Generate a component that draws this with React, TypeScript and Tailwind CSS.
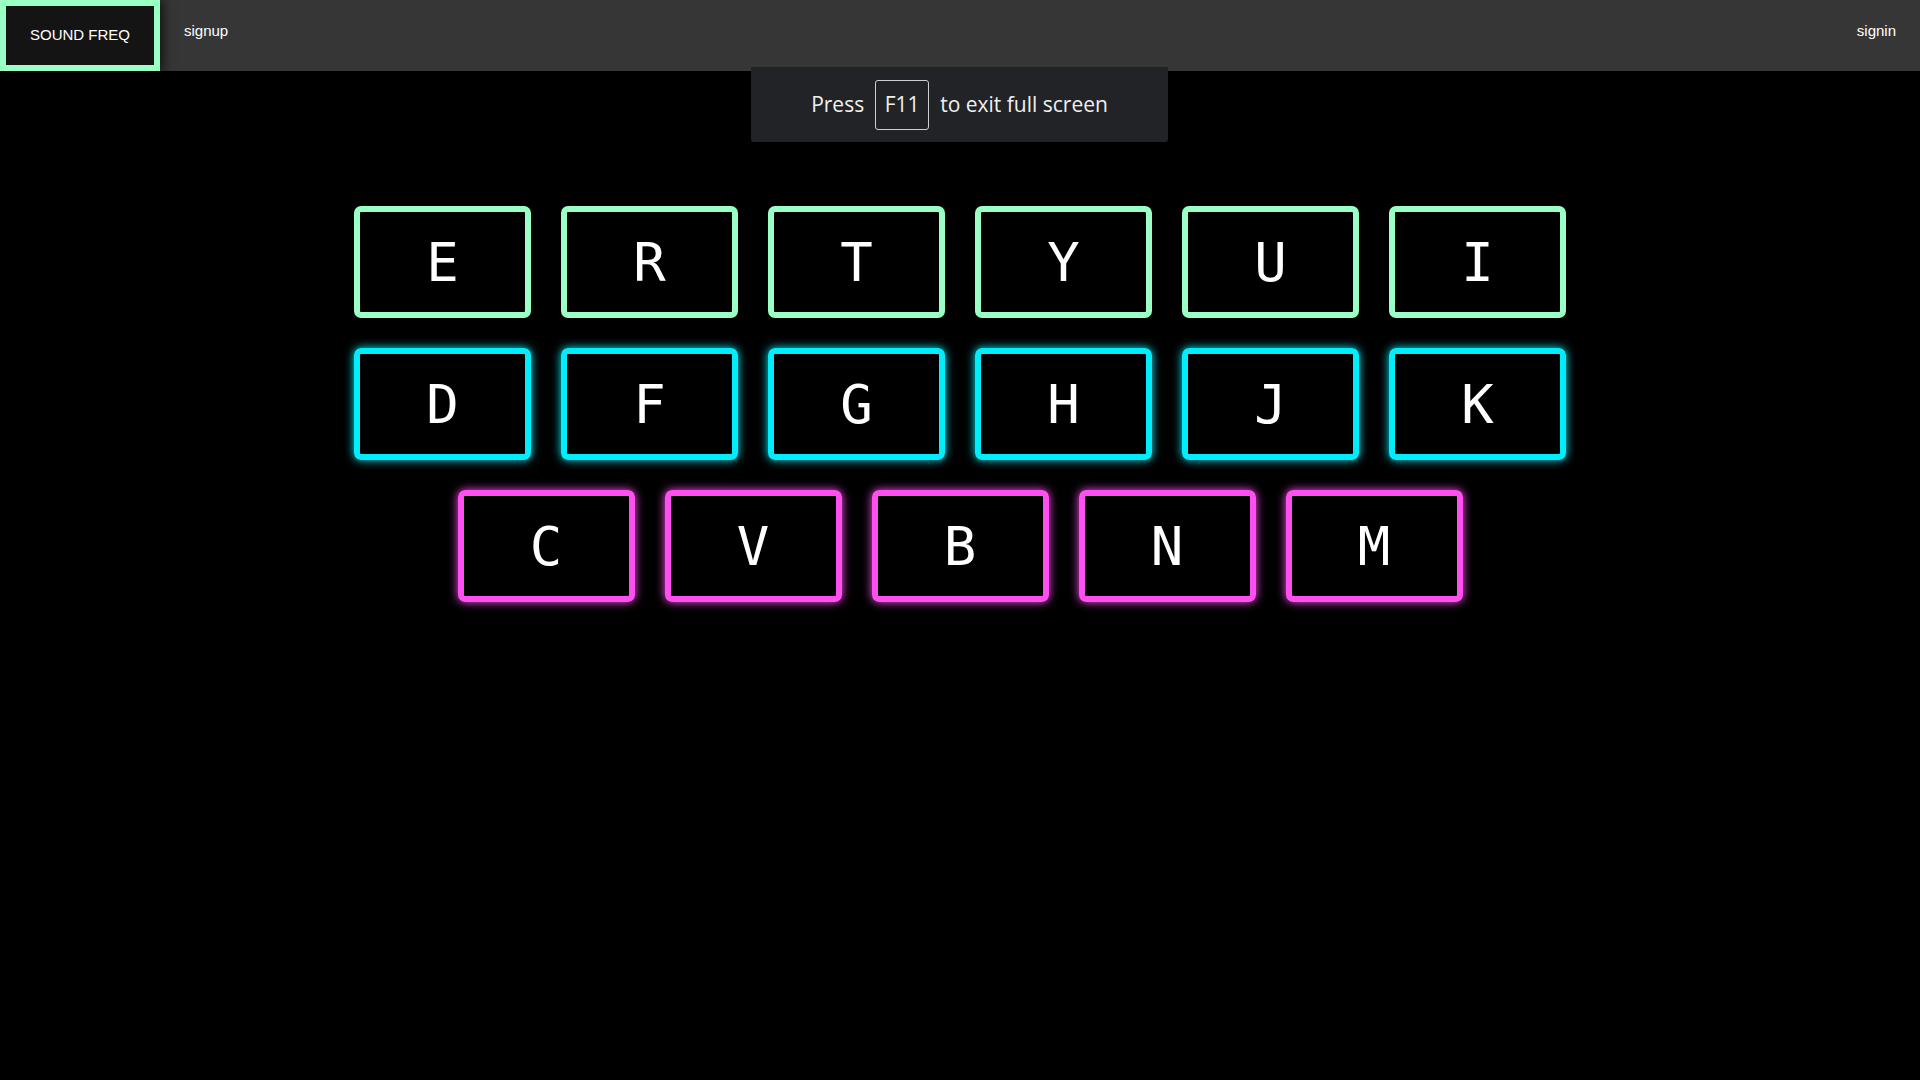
import React from 'react';

const rows = [
  { keys: ['E', 'R', 'T', 'Y', 'U', 'I'], cls: 'border-[#9affc5]' },
  { keys: ['D', 'F', 'G', 'H', 'J', 'K'], cls: 'border-[#00eefc] shadow-[0_0_10px_#00eefc]' },
  { keys: ['C', 'V', 'B', 'N', 'M'], cls: 'border-[#ff4ff0] shadow-[0_0_10px_#ff4ff0]' },
];

export default function App() {
  return (
    <div className="min-h-screen bg-black relative">
      {/* nav */}
      <nav className="h-[71px] bg-[#363636] flex items-stretch font-['Liberation_Sans',Arial,sans-serif] text-white">
        <div className="w-[160px] border-[6px] border-[#9affc5] bg-[#141414] flex items-center justify-center text-[15px] shadow-[4px_0_10px_rgba(0,0,0,0.6)]">
          SOUND FREQ
        </div>
        <a className="ml-[24px] mt-[20px] text-[15px]">signup</a>
        <a className="ml-auto mr-[24px] mt-[20px] text-[15px]">signin</a>
      </nav>

      {/* fullscreen hint */}
      <div className="absolute left-[751px] top-[67px] w-[417px] h-[75px] bg-[#212327] rounded-b-[3px] flex items-center justify-center gap-[11px] text-[21px] text-[#f0f0f0] font-['Open_Sans','Noto_Sans',sans-serif]">
        <span>Press</span>
        <span className="w-[54px] h-[50px] border border-[#cfcfcf] rounded-[3px] flex items-center justify-center">F11</span>
        <span>to exit full screen</span>
      </div>

      {/* keyboard */}
      <div className="pt-[135px] flex flex-col items-center gap-[30px]">
        {rows.map((row, i) => (
          <div key={i} className="flex gap-[30px]">
            {row.keys.map((k) => (
              <div
                key={k}
                className={`w-[177px] h-[112px] border-[6px] rounded-[7px] flex items-center justify-center text-white text-[54px] font-['DejaVu_Sans_Mono',monospace] ${row.cls}`}
              >
                {k}
              </div>
            ))}
          </div>
        ))}
      </div>
    </div>
  );
}
